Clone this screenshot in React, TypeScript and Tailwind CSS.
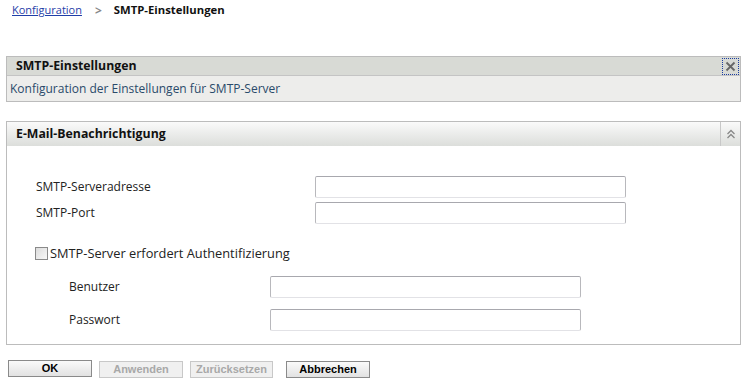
import React from 'react';

const font = "font-['Open_Sans','Noto_Sans',sans-serif]";

const Field = ({ label, indent }: { label: string; indent: string }) => (
  <div className="flex h-[26px] items-center">
    <span className={`${indent} text-[12px] text-[#222]`}>{label}</span>
    <input className="h-[22px] w-[311px] rounded-[2px] border border-[#b8b8bc] border-t-[#a8a8ae] border-b-[#e2e2e6] bg-white outline-none" />
  </div>
);

const Btn = ({ label, disabled, w = 'w-[84px]' }: { label: string; disabled?: boolean; w?: string }) => (
  <button
    className={`h-[17px] ${w} border font-['Liberation_Sans',Arial,sans-serif] text-[11px] font-bold leading-none ${
      disabled
        ? 'border-[#c8c8c8] bg-[#f0f0f0] text-[#a8a8a8]'
        : 'border-[#8a8a8a] bg-gradient-to-b from-[#fafafa] to-[#e2e2e2] text-black'
    }`}
  >
    {label}
  </button>
);

export default function App() {
  return (
    <div className={`${font} h-[389px] w-[748px] bg-white text-[12px]`}>
      <div className="flex h-[20px] items-center pl-[12px] pt-[1px]">
        <a className="text-[11px] text-[#1f3ea8] underline">Konfiguration</a>
        <span className="ml-[13px] font-bold text-[#888]">&gt;</span>
        <span className="ml-[12px] text-[11.3px] font-bold text-[#111]">SMTP-Einstellungen</span>
      </div>

      <div className="ml-[6px] mt-[36px] w-[735px] border border-[#bcbcbc]">
        <div className="flex h-[19px] items-center justify-between border-b border-[#c4c4c4] bg-[#d8dad5]">
          <span className="pl-[9px] text-[12.3px] font-bold text-[#111]">SMTP-Einstellungen</span>
          <div className="mr-[1px] flex h-[17px] w-[17px] items-center justify-center border border-dotted border-[#1a3ca0]">
            <svg width="11" height="11" viewBox="0 0 11 11">
              <path d="M1.5 1.5 L9.5 9.5 M9.5 1.5 L1.5 9.5" stroke="#666" strokeWidth="1.8" />
            </svg>
          </div>
        </div>
        <div className="flex h-[25px] items-center bg-[#ededeb] pl-[3px] text-[#2a4a6a]">
          Konfiguration der Einstellungen für SMTP-Server
        </div>
      </div>

      <div className="ml-[6px] mt-[19px] h-[224px] w-[735px] border border-[#bcbcbc]">
        <div className="flex h-[24px] items-center justify-between bg-gradient-to-b from-[#fafafa] to-[#dcdedb]">
          <span className="pl-[9px] text-[12.3px] font-bold text-[#111]">E-Mail-Benachrichtigung</span>
          <div className="flex h-full w-[20px] items-center justify-center border-l border-[#c8c8c8]">
            <svg width="10" height="10" viewBox="0 0 10 10">
              <path d="M1.5 5 L5 1.5 L8.5 5 M1.5 9 L5 5.5 L8.5 9" stroke="#888" strokeWidth="1.3" fill="none" />
            </svg>
          </div>
        </div>
        <div className="pt-[28px]">
          <Field label="SMTP-Serveradresse" indent="ml-[29px] w-[279px]" />
          <Field label="SMTP-Port" indent="ml-[29px] w-[279px]" />
          <label className="mt-[18px] ml-[28px] flex items-center gap-[2px]">
            <span className="h-[13px] w-[13px] border border-[#8a8a8a] bg-gradient-to-br from-[#dcdcdc] to-[#f8f8f8]" />
            <span className="text-[12.8px] text-[#222]">SMTP-Server erfordert Authentifizierung</span>
          </label>
          <div className="mt-[11px] flex flex-col gap-[7px]">
            <Field label="Benutzer" indent="ml-[62px] w-[201px]" />
            <Field label="Passwort" indent="ml-[62px] w-[201px]" />
          </div>
        </div>
      </div>

      <div className="ml-[8px] mt-[15px] flex">
        <Btn label="OK" />
        <div className="ml-[7px]">
          <Btn label="Anwenden" disabled />
        </div>
        <div className="ml-[7px]">
          <Btn label="Zurücksetzen" disabled w="w-[83px]" />
        </div>
        <div className="ml-[13px]">
          <Btn label="Abbrechen" />
        </div>
      </div>
    </div>
  );
}
